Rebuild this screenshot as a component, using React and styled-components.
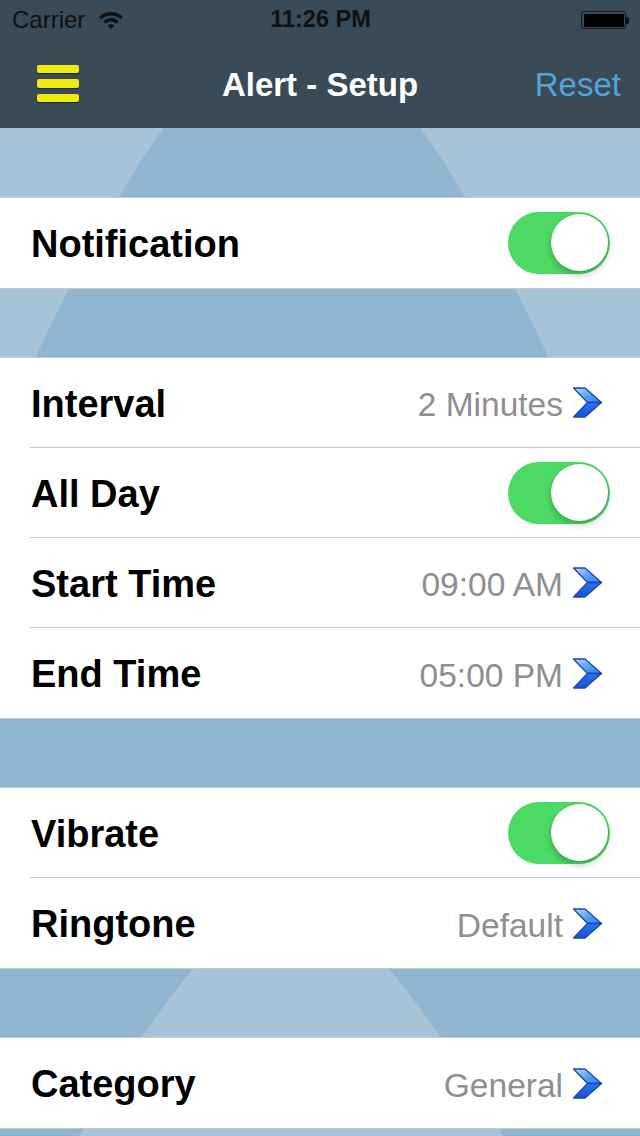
import React from "react";
import styled, { createGlobalStyle } from "styled-components";

const GlobalStyle = createGlobalStyle`
  html, body { margin: 0; padding: 0; }
  body { font-family: "Liberation Sans", Arial, Helvetica, sans-serif; background: #8fb5d0; }
  * { box-sizing: border-box; }
`;

const Screen = styled.div`
  width: 640px;
  height: 1136px;
  display: flex;
  flex-direction: column;
  overflow: hidden;
`;

const Header = styled.header`
  background: #3a4a57;
  display: flex;
  flex-direction: column;
`;

const StatusBar = styled.div`
  height: 40px;
  display: grid;
  grid-template-columns: 1fr auto 1fr;
  align-items: center;
  padding: 0 11px 0 12px;
  color: #111;
`;

const Carrier = styled.div`
  display: flex;
  align-items: center;
  gap: 13px;
  font-size: 24px;
  margin-top: -1px;
`;

const Clock = styled.div`
  font-size: 23.5px;
  font-weight: bold;
  margin-top: -1px;
`;

const BatteryWrap = styled.div`
  justify-self: end;
  display: flex;
  align-items: center;
`;

const BatteryBody = styled.div`
  width: 45px;
  height: 18px;
  border: 1.5px solid #151515;
  border-radius: 3px;
  padding: 1.5px;
  display: flex;
`;

const BatteryFill = styled.div`
  flex: 1;
  background: #000;
  border-radius: 1px;
`;

const BatteryTip = styled.div`
  width: 3px;
  height: 7px;
  background: #111;
  border-radius: 0 2px 2px 0;
`;

const NavBar = styled.div`
  height: 88px;
  display: grid;
  grid-template-columns: 1fr auto 1fr;
  align-items: center;
  padding: 2px 19px 0 19px;
`;

const MenuButton = styled.div`
  display: flex;
  flex-direction: column;
  gap: 6px;
  width: 42px;
  margin: -3px 0 0 18px;
`;

const MenuBar = styled.span`
  display: block;
  height: 8.5px;
  background: #ebeb0c;
  border-radius: 2px;
  box-shadow: 0 1px 1px rgba(0, 0, 0, 0.55);
`;

const Title = styled.div`
  color: #fff;
  font-size: 33px;
  font-weight: bold;
`;

const ResetButton = styled.div`
  justify-self: end;
  color: #52a3d9;
  font-size: 33px;
`;

const Content = styled.main`
  flex: 1;
  display: grid;
  grid-template-areas: "stack";
  grid-template-columns: 640px;
  grid-template-rows: 1008px;
  background: #a6c3d8;
  overflow: hidden;
`;

const Backdrop = styled.svg`
  grid-area: stack;
  display: block;
  width: 640px;
  height: 1008px;
`;

const SectionList = styled.div`
  grid-area: stack;
  align-self: start;
  display: flex;
  flex-direction: column;
  gap: 70px;
  padding-top: 70px;
`;

const Section = styled.section`
  background: #fff;
  box-shadow: 0 -1px 0 #c8c7cc, 0 1px 0 #c8c7cc;
  display: flex;
  flex-direction: column;
`;

const Row = styled.div`
  height: 90px;
  padding-left: 30px;
  display: flex;
`;

const RowBody = styled.div`
  flex: 1;
  display: flex;
  align-items: center;
  justify-content: space-between;
  padding-right: ${(p) => (p.$trail === "toggle" ? "30px" : "37px")};
  border-bottom: ${(p) => (p.$last ? "none" : "1px solid #c8c7cc")};
`;

const Label = styled.div`
  font-size: 38px;
  font-weight: bold;
  color: #000;
  margin: 3px 0 0 1px;
`;

const Accessory = styled.div`
  display: flex;
  align-items: center;
  gap: 9px;
`;

const Value = styled.span`
  font-size: 33.5px;
  color: #8e8e93;
  margin-top: 5px;
`;

const Track = styled.div`
  width: 102px;
  height: 62px;
  border-radius: 31px;
  background: #4cd964;
  display: flex;
  align-items: center;
  justify-content: flex-end;
  padding: 2px 2px 3px;
`;

const Knob = styled.div`
  width: 57px;
  height: 57px;
  border-radius: 50%;
  background: #fff;
  box-shadow: 0 0 0 0.5px rgba(0, 0, 0, 0.12), 0 4px 6px rgba(0, 0, 0, 0.22);
`;

/* Hyperbolic "beam" shapes of the backdrop, in content coordinates (page y - 128). */
const beamPath = (cx, yStart, yEnd, halfWidth) => {
  const left = [];
  const right = [];
  for (let y = yStart; y <= yEnd; y += 4) {
    const w = Math.min(halfWidth(y), 800);
    left.push(`${(cx - w).toFixed(1)},${(y - 128).toFixed(1)}`);
    right.push(`${(cx + w).toFixed(1)},${(y - 128).toFixed(1)}`);
  }
  return `M${left.reverse().join(" L")} L${right.join(" L")} Z`;
};

const darkBeam = beamPath(292, 34, 1140, (y) =>
  Math.sqrt(Math.max(0.1264 * (y + 610) ** 2 - 52389, 0))
);
const lightBeam = beamPath(291, 907, 1140, (y) =>
  Math.sqrt(Math.max(0.2441 * (y - 620) ** 2 - 20153, 0))
);

const BackdropArt = () => (
  <Backdrop viewBox="0 0 640 1008" aria-hidden="true">
    <rect width="640" height="1008" fill="#a6c3d8" />
    <path d={darkBeam} fill="#8fb5d0" />
    <path d={lightBeam} fill="#a6c3d8" />
  </Backdrop>
);

const WifiIcon = () => (
  <svg width="26" height="18" viewBox="0 0 26 18">
    <path d="M2.2 7.2 A15.2 15.2 0 0 1 23.8 7.2" fill="none" stroke="#111" strokeWidth="3.4" />
    <path d="M6.5 11.5 A9.2 9.2 0 0 1 19.5 11.5" fill="none" stroke="#111" strokeWidth="3.4" />
    <path d="M13 18 L9.6 14.6 A4.8 4.8 0 0 1 16.4 14.6 Z" fill="#111" />
  </svg>
);

const Chevron = () => (
  <svg width="31" height="31" viewBox="0 0 31 31">
    <defs>
      <linearGradient id="chevTop" x1="0" y1="0" x2="1" y2="1">
        <stop offset="0" stopColor="#b4d9fb" />
        <stop offset="0.55" stopColor="#5a9ef2" />
        <stop offset="1" stopColor="#2f78ea" />
      </linearGradient>
      <linearGradient id="chevBot" x1="0" y1="0" x2="0" y2="1">
        <stop offset="0" stopColor="#2a72ec" />
        <stop offset="1" stopColor="#1553d8" />
      </linearGradient>
    </defs>
    <path d="M1.5 1 L13 1 L29.5 15.5 L15.5 15.5 Z" fill="url(#chevTop)" stroke="#1c46b0" strokeWidth="1.3" strokeLinejoin="round" />
    <path d="M15.5 15.5 L29.5 15.5 L13 30 L1.5 30 Z" fill="url(#chevBot)" stroke="#1c46b0" strokeWidth="1.3" strokeLinejoin="round" />
  </svg>
);

const Toggle = () => (
  <Track>
    <Knob />
  </Track>
);

const SettingRow = ({ label, value, toggle, last }) => (
  <Row>
    <RowBody $trail={toggle ? "toggle" : "chevron"} $last={last}>
      <Label>{label}</Label>
      {toggle ? (
        <Toggle />
      ) : (
        <Accessory>
          <Value>{value}</Value>
          <Chevron />
        </Accessory>
      )}
    </RowBody>
  </Row>
);

const sections = [
  [{ label: "Notification", toggle: true }],
  [
    { label: "Interval", value: "2 Minutes" },
    { label: "All Day", toggle: true },
    { label: "Start Time", value: "09:00 AM" },
    { label: "End Time", value: "05:00 PM" },
  ],
  [
    { label: "Vibrate", toggle: true },
    { label: "Ringtone", value: "Default" },
  ],
  [{ label: "Category", value: "General" }],
];

export default function App() {
  return (
    <>
      <GlobalStyle />
      <Screen>
        <Header>
          <StatusBar>
            <Carrier>
              Carrier
              <WifiIcon />
            </Carrier>
            <Clock>11:26 PM</Clock>
            <BatteryWrap>
              <BatteryBody>
                <BatteryFill />
              </BatteryBody>
              <BatteryTip />
            </BatteryWrap>
          </StatusBar>
          <NavBar>
            <MenuButton>
              <MenuBar />
              <MenuBar />
              <MenuBar />
            </MenuButton>
            <Title>Alert - Setup</Title>
            <ResetButton>Reset</ResetButton>
          </NavBar>
        </Header>
        <Content>
          <BackdropArt />
          <SectionList>
            {sections.map((rows, i) => (
              <Section key={i}>
                {rows.map((r, j) => (
                  <SettingRow key={r.label} {...r} last={j === rows.length - 1} />
                ))}
              </Section>
            ))}
          </SectionList>
        </Content>
      </Screen>
    </>
  );
}
